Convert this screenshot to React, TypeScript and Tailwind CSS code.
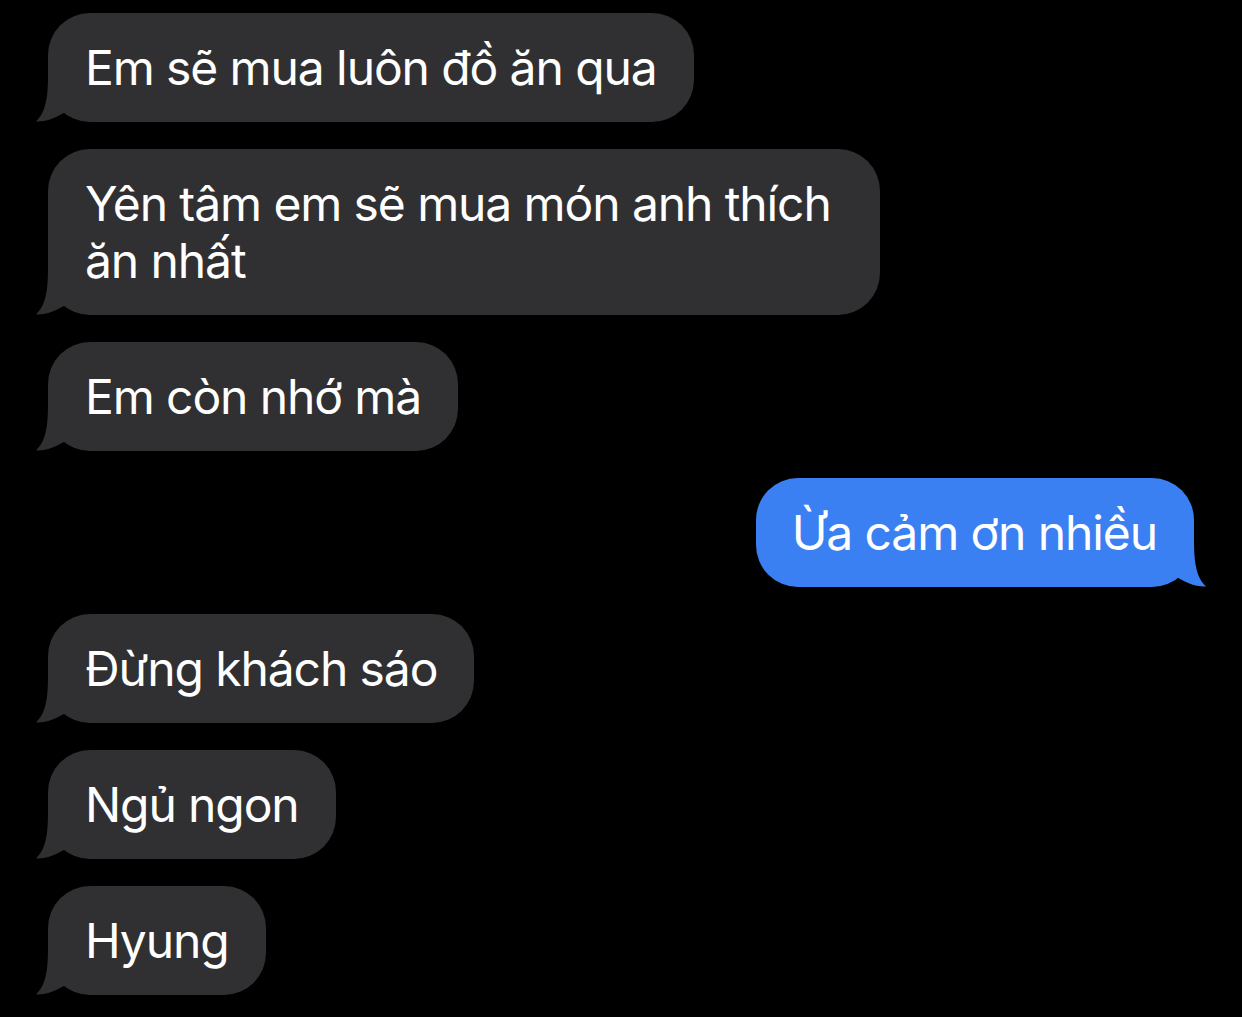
import React from "react"

type Message = {
  text: string
  fromMe?: boolean
}

const messages: Message[] = [
  { text: "Em sẽ mua luôn đồ ăn qua" },
  { text: "Yên tâm em sẽ mua món anh thích ăn nhất" },
  { text: "Em còn nhớ mà" },
  { text: "Ừa cảm ơn nhiều", fromMe: true },
  { text: "Đừng khách sáo" },
  { text: "Ngủ ngon" },
  { text: "Hyung" },
]

function Tail({ color, mine }: { color: string; mine?: boolean }) {
  return (
    <svg
      width="60"
      height="46"
      viewBox="0 0 60 46"
      className={mine ? "absolute -right-[12px] bottom-0 -scale-x-100" : "absolute -left-[12px] bottom-0"}
    >
      <path
        d="M12 0 C12 24 9 37 0 45.5 C10 46 23 41 32 34 C39 41 48 45.5 60 46 L60 0 Z"
        fill={color}
      />
    </svg>
  )
}

function Bubble({ msg }: { msg: Message }) {
  const color = msg.fromMe ? "#3b80f2" : "#303032"
  return (
    <div className={msg.fromMe ? "flex justify-end" : "flex justify-start"}>
      <div
        className={
          "relative max-w-[832px] rounded-[42px] py-[26px] text-[48px] leading-[57px] tracking-[-1.1px] text-white " +
          (msg.fromMe ? "bg-[#3b80f2] pl-[36px] pr-[37px]" : "bg-[#303032] px-[37px]")
        }
      >
        <Tail color={color} mine={msg.fromMe} />
        <span className="relative">{msg.text}</span>
      </div>
    </div>
  )
}

export default function App() {
  return (
    <div
      className="min-h-screen bg-black px-[48px] pt-[13px] pb-6 flex flex-col gap-[27px]"
      style={{ fontFamily: "Inter, 'Noto Sans', sans-serif" }}
    >
      {messages.map((m, i) => (
        <Bubble key={i} msg={m} />
      ))}
    </div>
  )
}
